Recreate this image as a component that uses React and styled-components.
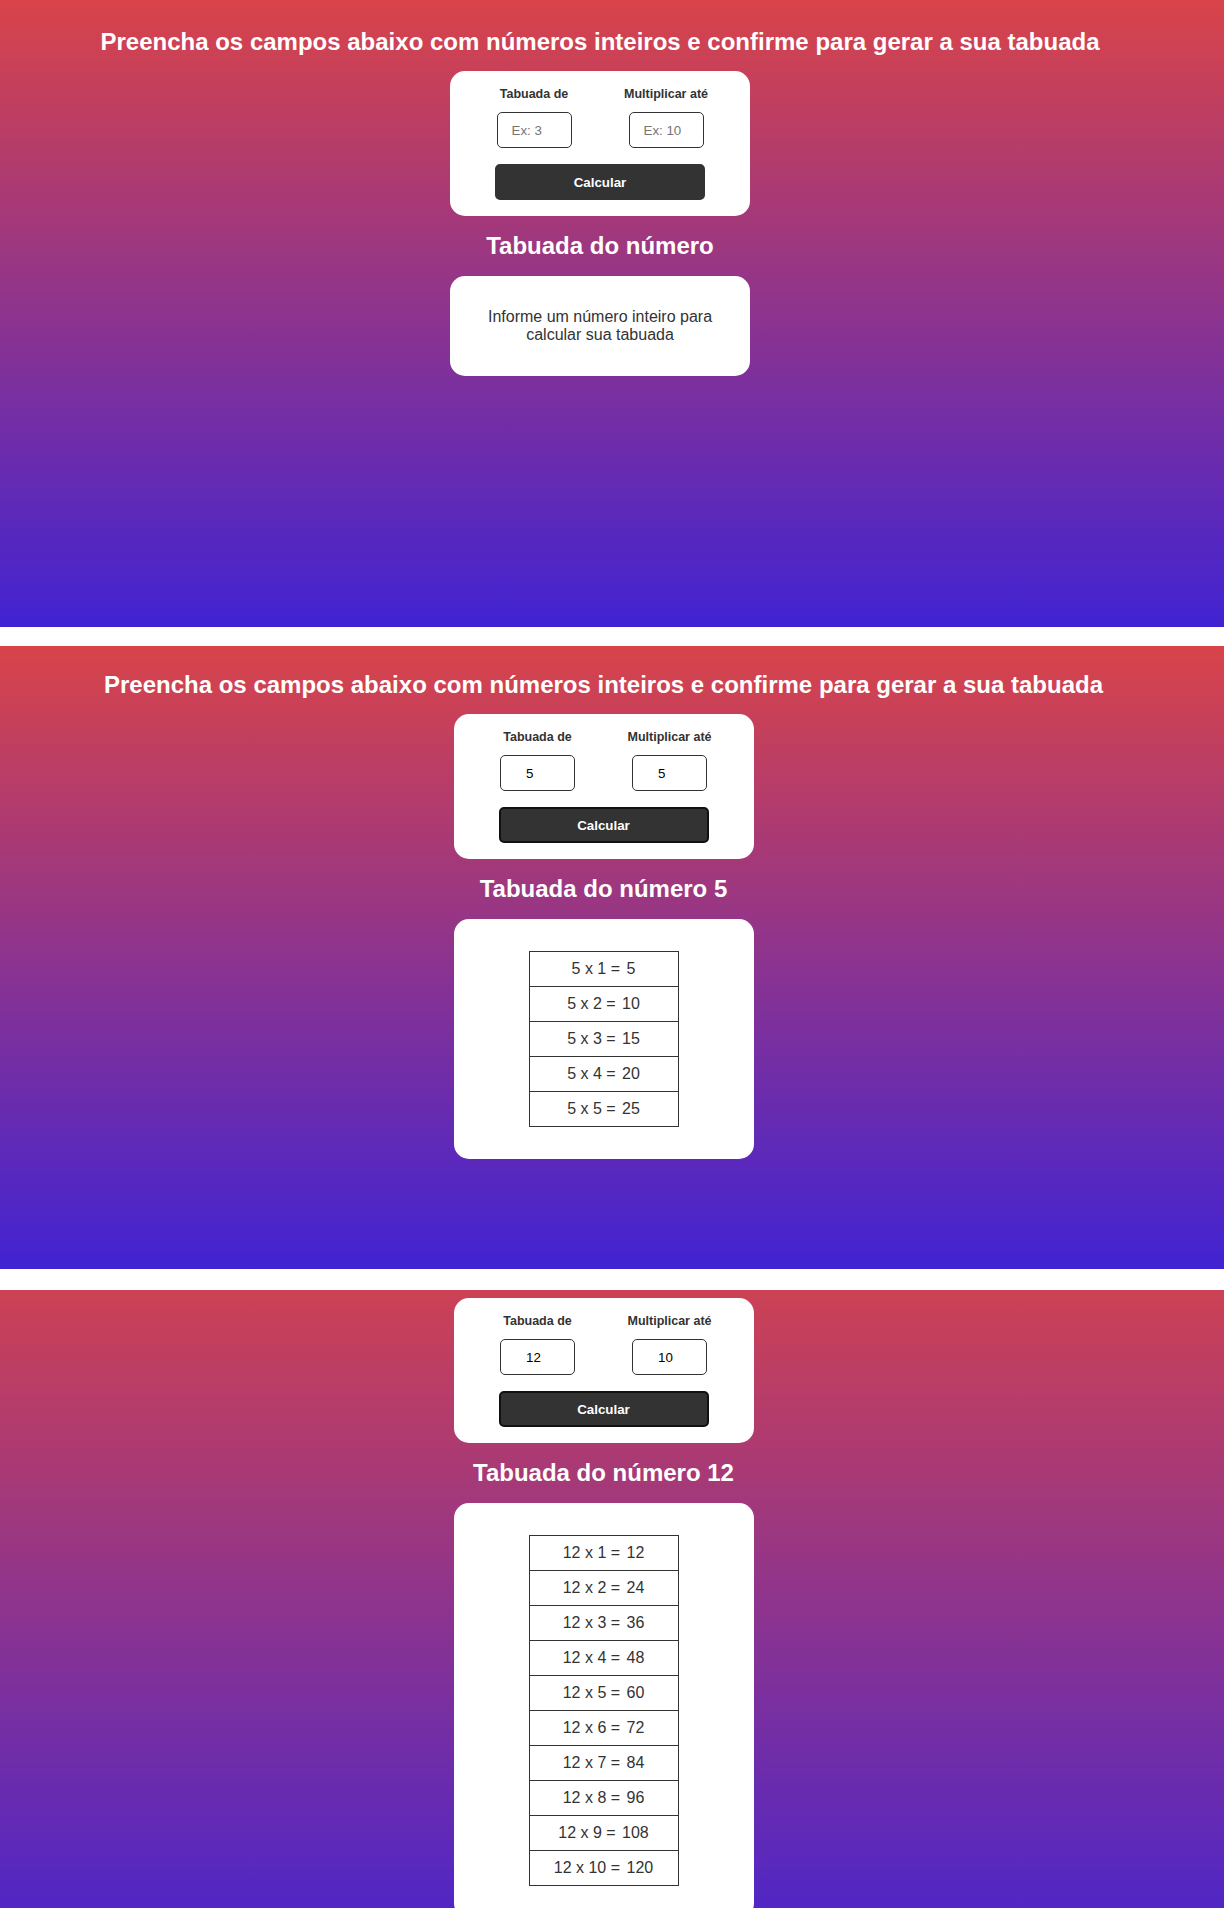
import React from 'react'
import styled, { createGlobalStyle } from 'styled-components'

const GlobalStyle = createGlobalStyle`
  * { box-sizing: border-box; }
  body {
    margin: 0;
    background: #fff;
    font-family: "Liberation Sans", Arial, sans-serif;
  }
`

const Stack = styled.div`
  display: flex;
  flex-direction: column;
`

const Shot = styled.section`
  height: ${p => p.$height}px;
  margin-top: ${p => p.$offset || 0}px;
  overflow: hidden;
`

const Page = styled.main`
  min-height: ${p => p.$pageHeight}px;
  margin-top: -${p => p.$scroll || 0}px;
  padding: 28px ${p => p.$gutter}px 0 0;
  background: linear-gradient(to bottom, #d94449, #4123d3);
  display: flex;
  flex-direction: column;
  align-items: center;
`

const Title = styled.h1`
  margin: 0 0 15px;
  font-size: 24px;
  line-height: 28px;
  font-weight: 700;
  color: #fff;
  text-align: center;
`

const FormCard = styled.form`
  width: 300px;
  padding: 16px 0;
  background: #fff;
  border-radius: 15px;
  display: flex;
  flex-direction: column;
  align-items: center;
`

const Fields = styled.div`
  display: flex;
  gap: 22px;
  margin-bottom: 16px;
`

const Field = styled.label`
  width: 110px;
  display: flex;
  flex-direction: column;
  align-items: center;
  gap: 10px;
`

const FieldName = styled.span`
  font-size: 12.5px;
  line-height: 15px;
  font-weight: 700;
  color: #333;
`

const NumberInput = styled.input`
  width: 75px;
  height: 36px;
  padding: 0 0 0 ${p => (p.$filled ? 25 : 14)}px;
  border: 1px solid #333;
  border-radius: 5px;
  font-family: "Liberation Sans", Arial, sans-serif;
  font-size: 13.33px;
  color: #000;
  background: #fff;
  outline: none;
  &::placeholder {
    color: #757575;
  }
`

const Button = styled.button`
  width: 210px;
  height: 36px;
  background: #333;
  color: #fff;
  border: 2px solid ${p => (p.$pressed ? '#111' : '#333')};
  border-radius: 5px;
  font-family: "Liberation Sans", Arial, sans-serif;
  font-size: 13.33px;
  font-weight: 700;
  cursor: pointer;
`

const Subtitle = styled.h2`
  margin: 16px 0;
  font-size: 24px;
  line-height: 28px;
  font-weight: 700;
  color: #fff;
  text-align: center;
`

const ResultCard = styled.div`
  width: 300px;
  padding: 32px;
  background: #fff;
  border-radius: 15px;
  text-align: center;
  font-size: 16px;
  line-height: 18px;
  color: #333;
`

const Table = styled.table`
  width: 150px;
  margin: 0 auto;
  border-collapse: collapse;
`

const Cell = styled.td`
  padding: 8px 0;
  border: 1px solid #333;
  font-size: 16px;
  line-height: 18px;
  color: #333;
`

const Product = styled.span`
  padding-left: 2px;
`

function Tabuada({ base, upTo, scroll, pageHeight, gutter }) {
  const filled = base !== undefined
  const rows = []
  for (let i = 1; filled && i <= upTo; i++) rows.push(i)

  return (
    <Page $scroll={scroll} $pageHeight={pageHeight} $gutter={gutter}>
      <Title>Preencha os campos abaixo com números inteiros e confirme para gerar a sua tabuada</Title>
      <FormCard onSubmit={e => e.preventDefault()}>
        <Fields>
          <Field>
            <FieldName>Tabuada de</FieldName>
            <NumberInput $filled={filled} placeholder="Ex: 3" defaultValue={filled ? base : ''} />
          </Field>
          <Field>
            <FieldName>Multiplicar até</FieldName>
            <NumberInput $filled={filled} placeholder="Ex: 10" defaultValue={filled ? upTo : ''} />
          </Field>
        </Fields>
        <Button type="submit" $pressed={filled}>Calcular</Button>
      </FormCard>
      <Subtitle>Tabuada do número{filled ? ` ${base}` : ''}</Subtitle>
      <ResultCard>
        {filled ? (
          <Table>
            <tbody>
              {rows.map(i => (
                <tr key={i}>
                  <Cell>
                    {`${base} x ${i} = `}
                    <Product>{base * i}</Product>
                  </Cell>
                </tr>
              ))}
            </tbody>
          </Table>
        ) : (
          'Informe um número inteiro para calcular sua tabuada'
        )}
      </ResultCard>
    </Page>
  )
}

export default function App() {
  return (
    <>
      <GlobalStyle />
      <Stack>
        <Shot $height={627}>
          <Tabuada pageHeight={627} gutter={24} />
        </Shot>
        <Shot $height={623} $offset={19}>
          <Tabuada base={5} upTo={5} scroll={3} pageHeight={626} gutter={17} />
        </Shot>
        <Shot $height={618} $offset={21}>
          <Tabuada base={12} upTo={10} scroll={63} pageHeight={760} gutter={17} />
        </Shot>
      </Stack>
    </>
  )
}
